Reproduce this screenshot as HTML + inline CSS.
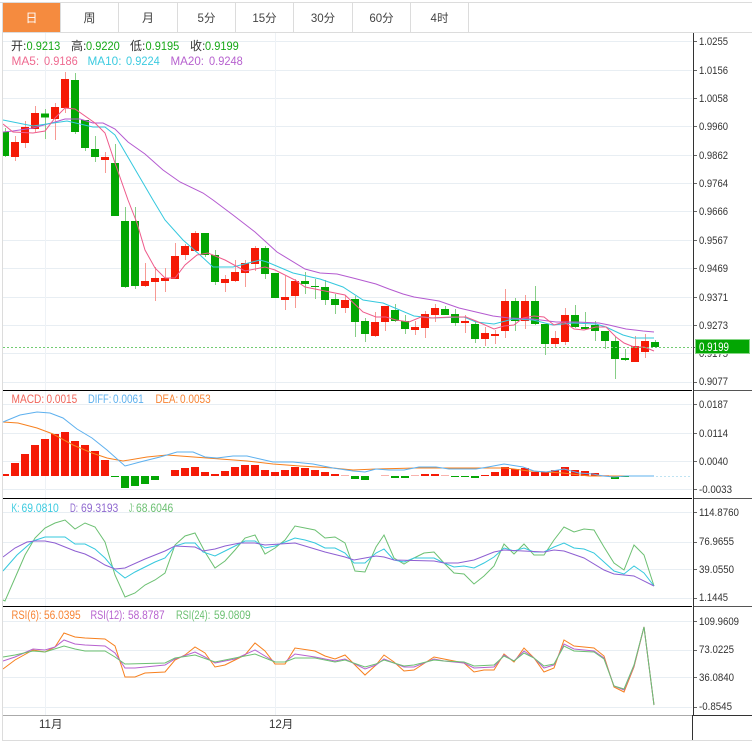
<!DOCTYPE html>
<html><head><meta charset="utf-8"><title>K线图</title>
<style>
html,body{margin:0;padding:0;background:#fff;width:752px;height:748px;overflow:hidden}
svg{display:block}
text{font-family:"Liberation Sans","Noto Sans CJK SC",sans-serif}
.tab{font-size:11.5px;fill:#444;text-anchor:middle}
.ax{font-size:11px;fill:#333}
.h{font-size:12px}
.s{font-size:11.5px}
.l{fill:none;stroke-width:1}
</style></head><body>
<svg width="752" height="748" viewBox="0 0 752 748" xmlns="http://www.w3.org/2000/svg">
<!-- grid -->
<path stroke="#e8eef3" stroke-width="1" fill="none" d="M3 41.5H692M3 70.5H692M3 98.5H692M3 126.5H692M3 155.5H692M3 183.5H692M3 211.5H692M3 240.5H692M3 268.5H692M3 297.5H692M3 325.5H692M3 353.5H692M3 382.5H692M3 404.5H692M3 433.5H692M3 461.5H692M3 489.5H692M3 512.5H692M3 542.5H692M3 569.5H692M3 598.5H692M3 621.5H692M3 650.5H692M3 677.5H692M3 707.5H692"/>
<path stroke="#eef2f6" stroke-width="1" fill="none" d="M45.5 33V715M275.5 33V715"/>
<!-- wicks -->
<path stroke="#f79a94" stroke-width="1" fill="none" d="M15.5 136V161M25.5 121V148M35.5 106V132M55.5 103V140M65.5 72V113M105.5 152V173M145.5 263V287M155.5 267V301M165.5 268V292M175.5 243V279M185.5 244V260M195.5 231V252M225.5 275V292M235.5 260V282M245.5 260V287M255.5 246V271M285.5 276V310M295.5 279V308M345.5 295V313M375.5 312V337M385.5 306V331M415.5 321V335M425.5 311V338M435.5 304V322M465.5 315V333M485.5 327V346M495.5 330V344M505.5 289V338M525.5 295V329M555.5 331V348M565.5 308V345M635.5 336V362M645.5 334V358"/>
<path stroke="#86ce86" stroke-width="1" fill="none" d="M5.5 128V157M45.5 109V139M75.5 73V134M85.5 120V151M95.5 136V162M115.5 144V216M125.5 207V288M135.5 207V289M205.5 233V257M215.5 250V285M265.5 246V279M275.5 273V298M305.5 272V294M315.5 279V299M325.5 280V305M335.5 294V314M355.5 296V337M365.5 318V342M395.5 304V322M405.5 315V334M445.5 306V315M455.5 309V326M475.5 321V343M515.5 298V331M535.5 286V325M545.5 324V355M575.5 305V328M585.5 312V330M595.5 321V341M605.5 331V349M615.5 337V379M625.5 349V361M655.5 340V347"/>
<!-- bodies -->
<path fill="#f51a06" d="M11 142h8v15h-8zM21 127h8v16h-8zM31 113h8v16h-8zM51 107h8v12h-8zM61 79h8v29h-8zM101 157h8v3h-8zM141 281h8v5h-8zM151 278h8v4h-8zM161 278h8v3h-8zM171 256h8v23h-8zM181 246h8v9h-8zM191 233h8v18h-8zM221 279h8v4h-8zM231 272h8v9h-8zM241 263h8v10h-8zM251 248h8v16h-8zM281 297h8v3h-8zM291 281h8v15h-8zM341 300h8v8h-8zM371 322h8v14h-8zM381 306h8v16h-8zM411 327h8v3h-8zM421 314h8v14h-8zM431 308h8v7h-8zM461 321h8v2h-8zM481 333h8v6h-8zM491 334h8v2h-8zM501 301h8v30h-8zM521 301h8v20h-8zM551 338h8v6h-8zM561 315h8v27h-8zM631 346h8v16h-8zM641 341h8v11h-8z"/>
<path fill="#03a603" d="M3 132h6v24h-6zM41 113.500h8v4h-8zM71 80h8v52h-8zM81 120h8v28h-8zM91 149h8v8h-8zM111 163h8v53h-8zM121 221h8v66h-8zM131 221h8v65h-8zM201 233h8v22h-8zM211 255h8v27h-8zM261 248h8v26h-8zM271 273h8v25h-8zM301 281h8v3h-8zM311 286h8v1h-8zM321 287h8v13h-8zM331 299h8v6h-8zM351 299h8v23h-8zM361 321h8v13h-8zM391 310h8v11h-8zM401 321h8v8h-8zM441 309h8v6h-8zM451 314h8v9h-8zM471 324h8v15h-8zM511 301h8v20h-8zM531 301h8v23h-8zM541 324h8v20h-8zM571 315h8v12h-8zM581 327h8v2h-8zM591 325h8v6h-8zM601 331h8v10h-8zM611 341h8v18h-8zM621 358h8v2h-8zM651 342h8v5h-8z"/>
<!-- MA lines -->
<polyline class="l" stroke="#b45ad0" points="3,132 13,131 33,128 55,122 65,119 80,119 93,123 103,123 115,129 128,142 145,154 163,170 180,182 203,193 213,200 233,215 255,232 277,252 305,269 320,273 337,274 353,278 376,284 389,289 403,294 414,297 439,301 459,308 476,312 493,316 509,318 533,319 556,322 576,322 599,323 609,325 626,329 643,331 654,332"/>
<polyline class="l" stroke="#35c8de" points="3,120 33,126 67,121 93,127 105,127 115,135 153,200 165,220 183,240 200,255 213,267 233,267 260,260 267,262 293,273 320,279 343,287 363,300 376,302 383,303 414,316 433,318 464,317 476,322 494,324 513,319 533,320 553,325 573,323 596,324 606,327 623,335 634,338 654,338"/>
<polyline class="l" stroke="#ee5a8b" points="3,124 13,132 33,133 45,131 55,118 65,108 75,109 95,123 105,133 115,163 128,200 137,223 145,250 155,268 165,278 175,278 185,265 197,255 208,253 225,260 245,271 265,267 275,270 295,280 305,287 325,291 345,295 363,312 376,317 386,317 396,320 409,322 421,317 431,318 451,317 466,317 476,321 494,329 504,326 514,325 523,318 534,316 544,317 554,325 564,322 574,329 584,330 596,327 606,327 616,337 624,343 634,347 644,347 654,351"/>
<path stroke="#72cc72" stroke-width="1" stroke-dasharray="2 2" fill="none" d="M3 347.500H692"/>
<!-- MACD bars -->
<path fill="#f51a06" d="M3 474h6v2h-6zM11 463h8v13h-8zM21 454h8v22h-8zM31 445h8v31h-8zM41 439h8v37h-8zM51 434h8v42h-8zM61 432h8v44h-8zM71 441h8v35h-8zM81 445h8v31h-8zM91 451h8v25h-8zM101 460h8v16h-8zM171 470h8v6h-8zM181 468h8v8h-8zM191 467h8v9h-8zM201 472h8v4h-8zM211 474h8v2h-8zM221 471h8v5h-8zM231 467h8v9h-8zM241 465h8v11h-8zM251 465h8v11h-8zM261 470h8v6h-8zM271 472h8v4h-8zM281 470h8v6h-8zM291 467h8v9h-8zM301 468h8v8h-8zM311 470h8v6h-8zM321 472h8v4h-8zM331 474h8v2h-8zM421 474h8v2h-8zM431 474h8v2h-8zM481 475h8v1h-8zM491 472h8v4h-8zM501 467h8v9h-8zM511 469h8v7h-8zM521 468h8v8h-8zM531 472h8v4h-8zM541 472h8v4h-8zM551 470h8v6h-8zM561 467h8v9h-8zM571 470h8v6h-8zM581 471h8v5h-8zM591 473h8v3h-8z"/>
<path fill="#f9b3ad" d="M341 475h8v1h-8zM381 475h8v1h-8zM411 475h8v1h-8zM441 475h8v1h-8zM601 475h8v1h-8z"/>
<path fill="#03a603" d="M111 476h8v1h-8zM121 476h8v12h-8zM131 476h8v10h-8zM141 476h8v8h-8zM151 476h8v4h-8zM351 476h8v3h-8zM361 476h8v4h-8zM391 476h8v2h-8zM401 476h8v2h-8zM451 476h8v1h-8zM461 476h8v1h-8zM471 476h8v2h-8zM611 476h8v3h-8zM621 476h8v1h-8z"/>
<path stroke="#bfe3f2" stroke-width="1" stroke-dasharray="2 2" fill="none" d="M656 476.500H692"/>
<polyline class="l" stroke="#f7801e" points="3,422 18,423 37,428 53,434 73,445 92,453 107,458 123,461 147,457 167,455 207,458 247,461 273,464 300,466 333,468 353,470 376,469 416,468 486,468 506,468 529,471 563,473 589,476 609,476 654,476"/>
<polyline class="l" stroke="#5db0ee" points="3,422 20,415 37,412 50,413 63,418 77,429 92,438 107,450 125,466 140,462 160,457 177,452 193,452 205,457 217,458 233,456 247,456 260,459 273,462 293,462 313,464 333,468 353,471 365,472 376,469 389,470 404,470 419,467 436,467 449,469 476,469 488,467 504,464 523,467 534,471 546,472 564,469 579,473 593,474 603,476 614,477 626,476 654,476"/>
<!-- KDJ -->
<polyline class="l" stroke="#6cc072" points="3,600 5,601 15,578 25,555 35,538 45,528 55,523 65,520 75,529 85,523 95,527 105,542 115,575 125,597 135,593 145,585 155,580 165,573 175,545 185,536 195,533 205,552 215,568 225,561 235,550 245,538 255,535 265,554 275,548 285,540 295,526 305,528 315,530 325,538 335,537 345,543 355,571 365,572 376,547 384,535 394,558 404,564 414,558 424,553 434,552 444,563 454,573 464,574 474,584 484,576 494,566 504,544 514,554 524,544 534,555 544,555 554,540 564,527 574,532 584,529 594,530 604,547 614,563 624,570 634,545 644,555 654,586"/>
<polyline class="l" stroke="#35c8de" points="3,571 17,555 33,541 45,537 65,537 75,544 85,544 95,549 105,558 115,570 125,578 135,572 145,567 155,562 165,558 175,546 185,543 195,543 203,552 215,556 225,551 235,546 245,541 255,541 265,548 275,546 285,542 295,538 305,540 315,543 325,548 335,548 345,553 354,563 365,563 376,553 384,549 394,560 404,562 414,558 434,558 444,563 454,567 464,566 474,568 484,563 494,557 504,548 514,551 524,548 534,552 544,552 554,547 564,543 574,548 584,549 594,553 604,562 614,571 624,574 634,566 644,573 654,586"/>
<polyline class="l" stroke="#8e5fd2" points="3,557 15,548 27,542 35,541 45,541 55,543 65,547 75,551 85,554 95,559 105,565 115,569 125,568 145,559 165,551 175,546 195,547 203,551 215,549 225,546 240,543 255,543 265,545 295,543 305,546 325,552 345,557 354,560 365,558 376,556 384,557 394,560 434,561 444,563 458,563 474,560 494,552 504,550 544,552 554,550 564,551 584,558 604,570 614,574 634,576 654,586"/>
<!-- RSI -->
<polyline class="l" stroke="#f7801e" points="3,669 15,660 33,650 45,652 55,647 64,633 75,637 85,638 105,639 115,646 125,677 135,677 145,673 165,672 175,660 185,655 195,647 205,653 215,667 225,665 235,660 245,655 255,643 265,651 275,664 285,664 295,648 315,651 325,656 335,659 345,655 365,675 376,665 384,655 394,662 404,671 414,670 434,657 444,659 464,663 474,672 484,670 494,670 504,654 514,662 524,648 534,658 544,672 554,668 564,640 574,646 594,648 604,656 614,687 624,692 634,667 644,627 654,705"/>
<polyline class="l" stroke="#b762cf" points="3,661 15,657 33,649 45,650 55,647 64,640 75,644 85,645 105,646 115,653 125,668 135,668 165,665 175,659 195,652 205,657 215,663 235,659 255,650 265,656 275,662 285,662 295,654 315,657 335,661 345,659 365,669 376,665 384,659 394,663 404,667 414,667 434,659 444,661 464,663 474,668 494,667 504,655 514,661 524,651 534,658 544,668 554,665 564,644 574,649 594,651 604,658 614,686 624,690 634,666 644,627 654,705"/>
<polyline class="l" stroke="#6cc072" points="3,657 15,655 33,651 45,652 64,646 75,649 85,651 105,651 115,657 125,664 165,663 175,658 195,655 215,662 235,658 255,654 275,662 285,662 295,658 315,658 335,662 345,660 365,667 376,664 384,660 394,663 404,666 414,665 434,660 444,661 464,662 474,666 494,665 504,656 514,661 524,653 534,658 544,666 554,664 564,646 574,651 594,652 604,659 614,686 624,689 634,665 644,627 654,705"/>
<!-- panel separators -->
<path stroke="#000" stroke-width="1" fill="none" d="M3 390.500H692M3 498.500H692M3 606.500H692"/>
<path stroke="#555" stroke-width="1" fill="none" d="M693 390.500H752M693 498.500H752M693 606.500H752"/>
<path stroke="#aaa" stroke-width="1" fill="none" d="M3 715.500H692"/>
<path stroke="#333" stroke-width="1" fill="none" d="M692 715.500H752M693.500 33V715M692.500 715V740"/>
<path stroke="#666" stroke-width="1" fill="none" d="M694 41.500h3M694 70.500h3M694 98.500h3M694 126.500h3M694 155.500h3M694 183.500h3M694 211.500h3M694 240.500h3M694 268.500h3M694 297.500h3M694 325.500h3M694 382.500h3M694 404.500h3M694 433.500h3M694 461.500h3M694 489.500h3M694 512.500h3M694 542.500h3M694 569.500h3M694 598.500h3M694 621.500h3M694 650.500h3M694 677.500h3M694 707.500h3"/>
<!-- axis labels -->
<text class="ax" x="699" y="45" textLength="29" lengthAdjust="spacingAndGlyphs">1.0255</text>
<text class="ax" x="699" y="74" textLength="29" lengthAdjust="spacingAndGlyphs">1.0156</text>
<text class="ax" x="699" y="102" textLength="29" lengthAdjust="spacingAndGlyphs">1.0058</text>
<text class="ax" x="699" y="130" textLength="29" lengthAdjust="spacingAndGlyphs">0.9960</text>
<text class="ax" x="699" y="159" textLength="29" lengthAdjust="spacingAndGlyphs">0.9862</text>
<text class="ax" x="699" y="187" textLength="29" lengthAdjust="spacingAndGlyphs">0.9764</text>
<text class="ax" x="699" y="215" textLength="29" lengthAdjust="spacingAndGlyphs">0.9666</text>
<text class="ax" x="699" y="244" textLength="29" lengthAdjust="spacingAndGlyphs">0.9567</text>
<text class="ax" x="699" y="272" textLength="29" lengthAdjust="spacingAndGlyphs">0.9469</text>
<text class="ax" x="699" y="301" textLength="29" lengthAdjust="spacingAndGlyphs">0.9371</text>
<text class="ax" x="699" y="329" textLength="29" lengthAdjust="spacingAndGlyphs">0.9273</text>
<text class="ax" x="699" y="357" textLength="29" lengthAdjust="spacingAndGlyphs">0.9175</text>
<text class="ax" x="699" y="385" textLength="29" lengthAdjust="spacingAndGlyphs">0.9077</text>
<text class="ax" x="699" y="408" textLength="29" lengthAdjust="spacingAndGlyphs">0.0187</text>
<text class="ax" x="699" y="437" textLength="29" lengthAdjust="spacingAndGlyphs">0.0114</text>
<text class="ax" x="699" y="465" textLength="29" lengthAdjust="spacingAndGlyphs">0.0040</text>
<text class="ax" x="699" y="493" textLength="33" lengthAdjust="spacingAndGlyphs">-0.0033</text>
<text class="ax" x="699" y="516" textLength="40" lengthAdjust="spacingAndGlyphs">114.8760</text>
<text class="ax" x="699" y="545" textLength="35" lengthAdjust="spacingAndGlyphs">76.9655</text>
<text class="ax" x="699" y="573" textLength="35" lengthAdjust="spacingAndGlyphs">39.0550</text>
<text class="ax" x="699" y="601" textLength="29" lengthAdjust="spacingAndGlyphs">1.1445</text>
<text class="ax" x="699" y="625" textLength="40" lengthAdjust="spacingAndGlyphs">109.9609</text>
<text class="ax" x="699" y="653" textLength="35" lengthAdjust="spacingAndGlyphs">73.0225</text>
<text class="ax" x="699" y="681" textLength="35" lengthAdjust="spacingAndGlyphs">36.0840</text>
<text class="ax" x="699" y="710" textLength="33" lengthAdjust="spacingAndGlyphs">-0.8545</text>
<!-- price tag -->
<path stroke="#666" stroke-width="1" d="M694 347.500h3"/>
<rect x="695.500" y="339.500" width="54" height="14" fill="#03a603" stroke="#86d586"/>
<text x="699" y="351" fill="#fff" style="font-size:11.5px" textLength="30" lengthAdjust="spacingAndGlyphs">0.9199</text>
<!-- info rows -->
<text class="h" x="11" y="50" fill="#333">开:</text><text class="h" x="26.500" y="50" fill="#17a817" textLength="33.700" lengthAdjust="spacingAndGlyphs">0.9213</text>
<text class="h" x="71" y="50" fill="#333">高:</text><text class="h" x="86" y="50" fill="#17a817" textLength="33.700" lengthAdjust="spacingAndGlyphs">0.9220</text>
<text class="h" x="130" y="50" fill="#333">低:</text><text class="h" x="145.500" y="50" fill="#17a817" textLength="33.700" lengthAdjust="spacingAndGlyphs">0.9195</text>
<text class="h" x="190" y="50" fill="#333">收:</text><text class="h" x="205" y="50" fill="#17a817" textLength="33.700" lengthAdjust="spacingAndGlyphs">0.9199</text>
<text class="h" x="11.500" y="65" fill="#ef6a90" textLength="27.700" lengthAdjust="spacingAndGlyphs">MA5:</text><text class="h" x="44" y="65" fill="#ef6a90" textLength="33.700" lengthAdjust="spacingAndGlyphs">0.9186</text>
<text class="h" x="87.500" y="65" fill="#3ccbe0" textLength="34" lengthAdjust="spacingAndGlyphs">MA10:</text><text class="h" x="126" y="65" fill="#3ccbe0" textLength="33.700" lengthAdjust="spacingAndGlyphs">0.9224</text>
<text class="h" x="170.500" y="65" fill="#b762cf" textLength="33.500" lengthAdjust="spacingAndGlyphs">MA20:</text><text class="h" x="209" y="65" fill="#b762cf" textLength="33.700" lengthAdjust="spacingAndGlyphs">0.9248</text>
<text class="s" x="11.500" y="403" fill="#f0655a" textLength="32.700" lengthAdjust="spacingAndGlyphs">MACD:</text><text class="s" x="46.500" y="403" fill="#f0655a" textLength="30.700" lengthAdjust="spacingAndGlyphs">0.0015</text>
<text class="s" x="88" y="403" fill="#5db0ee" textLength="23.300" lengthAdjust="spacingAndGlyphs">DIFF:</text><text class="s" x="113" y="403" fill="#5db0ee" textLength="30.700" lengthAdjust="spacingAndGlyphs">0.0061</text>
<text class="s" x="155.500" y="403" fill="#f78434" textLength="22.700" lengthAdjust="spacingAndGlyphs">DEA:</text><text class="s" x="180" y="403" fill="#f78434" textLength="30.700" lengthAdjust="spacingAndGlyphs">0.0053</text>
<text class="s" x="11.500" y="512" fill="#3ccbe0" textLength="8" lengthAdjust="spacingAndGlyphs">K:</text><text class="s" x="21.500" y="512" fill="#3ccbe0" textLength="37.300" lengthAdjust="spacingAndGlyphs">69.0810</text>
<text class="s" x="70" y="512" fill="#8e68cf" textLength="8" lengthAdjust="spacingAndGlyphs">D:</text><text class="s" x="81" y="512" fill="#8e68cf" textLength="37.300" lengthAdjust="spacingAndGlyphs">69.3193</text>
<text class="s" x="129" y="512" fill="#6cc072" textLength="5" lengthAdjust="spacingAndGlyphs">J:</text><text class="s" x="136" y="512" fill="#6cc072" textLength="37.300" lengthAdjust="spacingAndGlyphs">68.6046</text>
<text class="s" x="11.500" y="619" fill="#f78434" textLength="30" lengthAdjust="spacingAndGlyphs">RSI(6):</text><text class="s" x="44" y="619" fill="#f78434" textLength="36.700" lengthAdjust="spacingAndGlyphs">56.0395</text>
<text class="s" x="90.500" y="619" fill="#b762cf" textLength="34.300" lengthAdjust="spacingAndGlyphs">RSI(12):</text><text class="s" x="128" y="619" fill="#b762cf" textLength="36.700" lengthAdjust="spacingAndGlyphs">58.8787</text>
<text class="s" x="176" y="619" fill="#6cc072" textLength="34.300" lengthAdjust="spacingAndGlyphs">RSI(24):</text><text class="s" x="214" y="619" fill="#6cc072" textLength="36.700" lengthAdjust="spacingAndGlyphs">59.0809</text>
<!-- date axis -->
<text x="39" y="728" fill="#333" style="font-size:11.5px">11月</text>
<text x="269" y="728" fill="#333" style="font-size:11.5px">12月</text>
<!-- toolbar & frame -->
<rect x="3" y="3" width="57" height="29" fill="#f58b3f"/>
<path stroke="#dcdcdc" stroke-width="1" fill="none" d="M0 2.500H752M2.500 2V741M3 32.500H752M2 740.500H752M60.500 3V32M118.500 3V32M177.500 3V32M235.500 3V32M293.500 3V32M352.500 3V32M410.500 3V32M468.500 3V32"/>
<text class="tab" x="31.500" y="22" style="fill:#fff;font-size:12px">日</text>
<text class="tab" x="89.500" y="22" style="font-size:12px">周</text>
<text class="tab" x="148" y="22" style="font-size:12px">月</text>
<text class="tab" x="206.500" y="22">5分</text>
<text class="tab" x="264.500" y="22">15分</text>
<text class="tab" x="323" y="22">30分</text>
<text class="tab" x="381.500" y="22">60分</text>
<text class="tab" x="439.500" y="22">4时</text>
</svg>
</body></html>
